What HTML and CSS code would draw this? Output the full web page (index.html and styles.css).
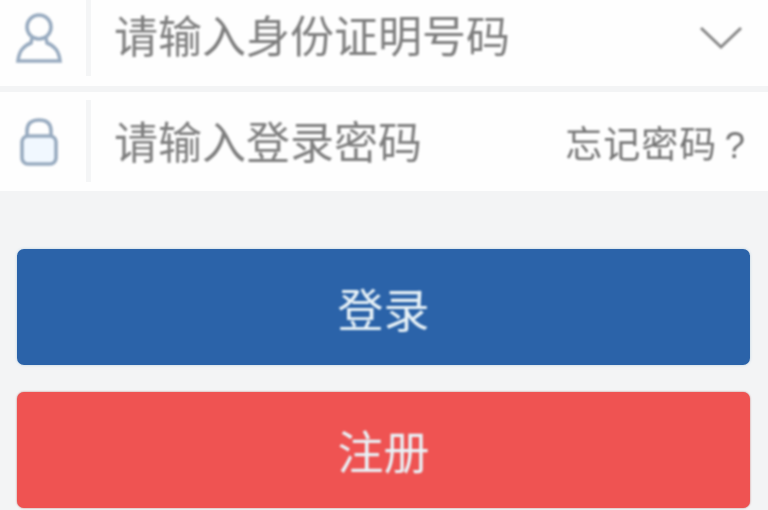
FILE: index.html
```html
<!DOCTYPE html>
<html lang="zh">
<head>
<meta charset="utf-8">
<title>登录</title>
<link rel="stylesheet" href="styles.css">
</head>
<body>
<main class="page">
  <section class="fields">
    <div class="row row-id">
      <div class="icon-cell">
        <svg class="icon" width="50" height="54" viewBox="0 0 50 54" fill="none">
          <circle cx="25" cy="16" r="12" class="stroke"/>
          <path d="M18 27 L17 32 C9 35 5 40 4 50 L46 50 C45 40 41 35 33 32 L32 27" class="stroke"/>
        </svg>
      </div>
      <div class="divider"></div>
      <span class="placeholder">请输入身份证明号码</span>
      <svg class="chevron" width="46" height="30" viewBox="0 0 46 30" fill="none">
        <path d="M3 5 L23 24 L43 5"/>
      </svg>
    </div>
    <div class="row row-pw">
      <div class="icon-cell">
        <svg class="icon" width="40" height="50" viewBox="0 0 40 50" fill="none">
          <path d="M8 20 V14 C8 6 13 3 20 3 C27 3 32 6 32 14 V20" class="stroke"/>
          <rect x="3" y="19" width="34" height="28" rx="6" fill="#f1f8ff" class="stroke"/>
        </svg>
      </div>
      <div class="divider"></div>
      <span class="placeholder">请输入登录密码</span>
      <a class="forgot">忘记密码 ?</a>
    </div>
  </section>
  <section class="actions">
    <button class="btn btn-login"><span>登录</span></button>
    <button class="btn btn-register"><span>注册</span></button>
  </section>
</main>
</body>
</html>
```

FILE: styles.css
```css
* { box-sizing: border-box; }
html, body { margin: 0; padding: 0; height: 510px; overflow: hidden; }
body {
  background: #f3f4f5;
  font-family: "Liberation Sans", "Noto Sans CJK SC", sans-serif;
}
.page { display: flex; flex-direction: column; height: 510px; overflow: hidden; }
.fields { display: flex; flex-direction: column; gap: 6px; }
.row { display: flex; align-items: center; background: #fefefe; }
.row-id { height: 86px; padding-bottom: 11px; }
.row-pw { height: 99px; }
.icon-cell { width: 78px; display: flex; justify-content: center; flex: none; }
.icon { filter: blur(1px); }
.stroke { stroke: #98abc0; stroke-width: 3.6; }
.divider { width: 5px; background: #f4f5f6; flex: none; margin-left: 8px; margin-right: 23px; align-self: stretch; }
.row-id .divider { margin-bottom: -1px; }
.row-pw .divider { margin: 8px 23px 9px 8px; }
.placeholder { font-size: 44px; line-height: 1; color: #7e7e7e; filter: blur(1px); }
.row-pw .placeholder { padding-top: 5px; }
.chevron { margin-left: auto; margin-right: 24px; filter: blur(0.9px); }
.chevron path { stroke: #858585; stroke-width: 3; }
.forgot { margin-left: auto; margin-right: 22px; font-size: 37px; letter-spacing: 1px; word-spacing: -4px; color: #747474; filter: blur(0.9px); white-space: nowrap; }
.actions { display: flex; flex-direction: column; gap: 27px; padding: 58px 18px 0 17px; }
.btn { width: 100%; height: 116px; border: 0; border-radius: 7px; flex: none; padding: 0; font-family: inherit; font-size: 46px; color: #e8f2f7; }
.btn span { display: block; filter: blur(0.9px); }
.btn-login { background: #2b63a9; box-shadow: 0 0 3px #b8cfe0; }
.btn-register { background: #ef5352; box-shadow: 0 0 2px #b96a6a; padding-bottom: 2px; }
```
